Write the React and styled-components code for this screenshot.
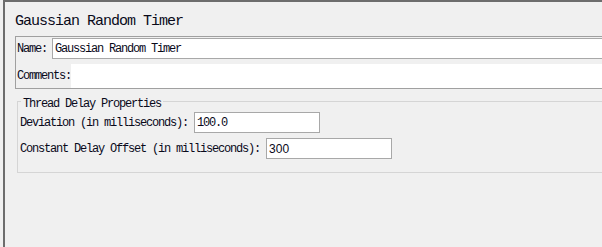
import React from 'react';
import styled, { createGlobalStyle } from 'styled-components';

const Global = createGlobalStyle`
  html, body { margin: 0; padding: 0; background: #f0f0f0; overflow: hidden; }
  #root { width: 602px; height: 247px; }
`;

const MONO = `"Liberation Mono", "Courier New", monospace`;

const Viewport = styled.div`
  width: 602px;
  height: 247px;
  overflow: hidden;
  background: #f0f0f0;
  padding-left: 3px;
  box-sizing: border-box;
`;

const Panel = styled.div`
  width: 660px;
  height: 100%;
  box-sizing: border-box;
  border-top: 2px solid #6d6d6d;
  border-left: 2px solid #6d6d6d;
  padding-left: 10px;
  display: flex;
  flex-direction: column;
  font-family: ${MONO};
  color: #0a0a1a;
`;

const Title = styled.div`
  font-size: 15px;
  letter-spacing: -1px;
  line-height: 20px;
  margin: 10px 0 4px;
  white-space: nowrap;
`;

const NamePanel = styled.div`
  border: 1px solid #a0a0a0;
  padding-top: 1px;
  display: flex;
  flex-direction: column;
  gap: 5px;
`;

const Row = styled.div`
  display: flex;
  align-items: center;
  height: ${p => p.$h || 21}px;
`;

const Label = styled.span`
  font-size: 12px;
  letter-spacing: -1.2px;
  line-height: 12px;
  white-space: nowrap;
  padding-left: ${p => p.$pad || 0}px;
`;

const TextField = styled.input`
  box-sizing: border-box;
  height: 21px;
  margin: 0 0 0 ${p => p.$gap || 0}px;
  padding: 0 2px;
  border: 1px solid #a8a8a8;
  background: #fff;
  color: #0a0a1a;
  outline: none;
  font-family: ${p => (p.$sans ? `"Liberation Sans", Arial, sans-serif` : MONO)};
  font-size: 12px;
  letter-spacing: ${p => (p.$sans ? '0' : '-1.2px')};
  ${p => (p.$width ? `width: ${p.$width}px;` : 'flex: 1; min-width: 0;')}
`;

const TextArea = styled.div`
  flex: 1;
  align-self: stretch;
  background: #fff;
`;

const Group = styled.fieldset`
  margin: 3px 0 0 2px;
  padding: 2px 0 13px 2px;
  border: 1px solid #d5d5d5;
  min-width: 0;
`;

const Legend = styled.legend`
  font-size: 12px;
  letter-spacing: -1.2px;
  line-height: 12px;
  padding: 6px 2px 0;
  margin-left: 1px;
  white-space: nowrap;
`;

const GroupBody = styled.div`
  display: flex;
  flex-direction: column;
  gap: 5px;
`;

export default function App() {
  return (
    <>
      <Global />
      <Viewport>
        <Panel>
          <Title>Gaussian Random Timer</Title>
          <NamePanel>
            <Row>
              <Label $pad={1}>Name:</Label>
              <TextField $gap={5} readOnly value="Gaussian Random Timer" />
            </Row>
            <Row $h={24}>
              <Label $pad={1}>Comments:</Label>
              <TextArea />
            </Row>
          </NamePanel>
          <Group>
            <Legend>Thread Delay Properties</Legend>
            <GroupBody>
              <Row>
                <Label>Deviation (in milliseconds):</Label>
                <TextField $gap={6} $width={126} readOnly value="100.0" />
              </Row>
              <Row>
                <Label>Constant Delay Offset (in milliseconds):</Label>
                <TextField $gap={6} $width={126} $sans readOnly value="300" />
              </Row>
            </GroupBody>
          </Group>
        </Panel>
      </Viewport>
    </>
  );
}
